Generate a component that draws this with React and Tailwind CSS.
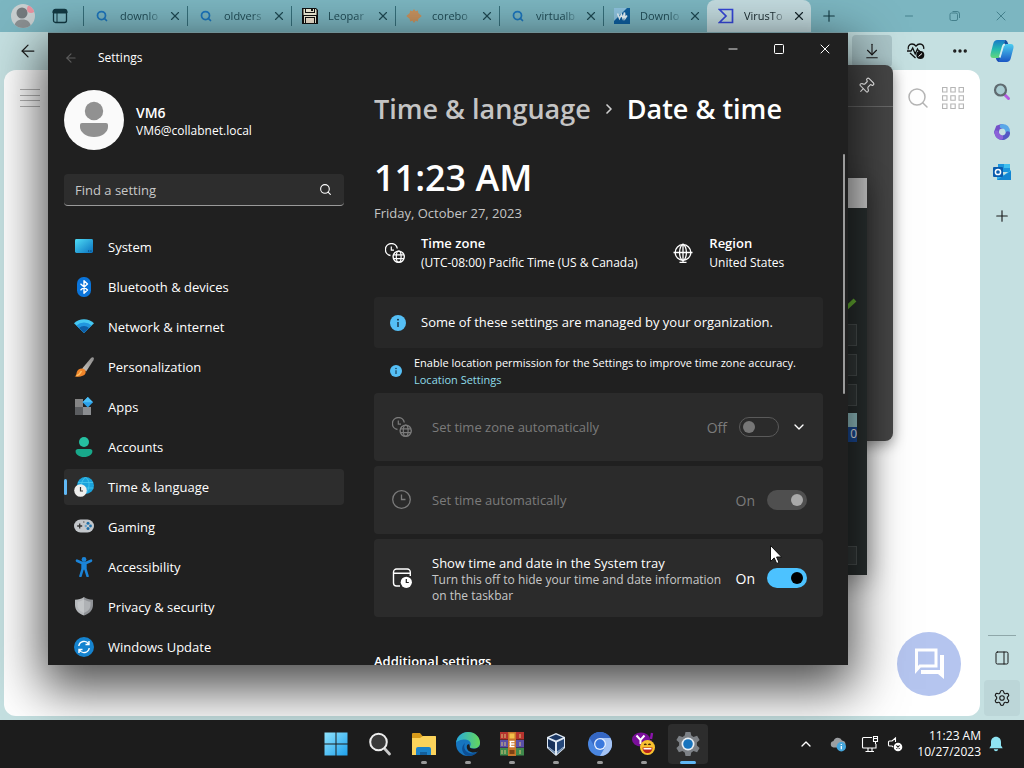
import { ArrowDownToLine, ArrowLeft, ChevronDown, ChevronRight, ChevronUp, Ellipsis, Minus, PanelRight, Pin, Plus, Search, Settings, Square, X } from 'lucide-react'
import { useState } from 'react'

/* ---------- navigation icons ---------- */

const SystemIcon = () => (
  <svg viewBox="0 0 20 20" className="size-5">
    <defs>
      <linearGradient id="sys" x1="0" y1="0" x2="1" y2="1">
        <stop offset="0" stopColor="#4fdcf5" />
        <stop offset="1" stopColor="#0a72c0" />
      </linearGradient>
    </defs>
    <rect x="1" y="2" width="18" height="14" rx="1.4" fill="url(#sys)" />
    <path d="M14 14h1.2M16.3 14h1.2" stroke="#083a66" />
  </svg>
)

const BluetoothIcon = () => (
  <svg viewBox="0 0 20 20" className="size-5">
    <rect x="3" y="0" width="14" height="20" rx="6.5" fill="#0a74da" />
    <path d="M6.5 6.8l7 6.2-3.5 3.2V3.8l3.5 3.2-7 6.2" fill="none" stroke="#fff" strokeWidth="1.4" strokeLinejoin="round" />
  </svg>
)

const WifiIcon = () => (
  <svg viewBox="0 0 20 20" className="size-5">
    <path d="M0 6.2a14.5 14.5 0 0 1 20 0L10 16z" fill="#45c8f2" />
    <path d="M2.4 8.5a11 11 0 0 1 15.2 0L10 16z" fill="#2196df" />
    <path d="M5 11a7.4 7.4 0 0 1 10 0l-5 5z" fill="#0d5ea8" />
  </svg>
)

const BrushIcon = () => (
  <svg viewBox="0 0 20 20" className="size-5">
    <defs>
      <linearGradient id="handle" x1="1" y1="0" x2="0" y2="1">
        <stop offset="0" stopColor="#8b8b8b" />
        <stop offset="1" stopColor="#c9c4bd" />
      </linearGradient>
    </defs>
    <path d="M19.4.5c.8.6.6 1.7 0 2.7l-7.2 11.4-4-3L17 1c.8-.8 1.7-1 2.4-.5z" fill="url(#handle)" />
    <path d="M8 11.4c2 0 4 1.6 3.7 3.8C11.3 18.3 8 20 .6 19.6c1.8-1 1.7-2.3 2.2-4.5.5-2.3 2.5-3.7 5.2-3.7z" fill="#f0852a" />
    <path d="M2.5 18.8c2.5-.6 3.5-2 5-4.8" fill="none" stroke="#ffc163" strokeWidth="1.5" />
  </svg>
)

const AppsIcon = () => (
  <svg viewBox="0 0 20 20" className="size-5">
    <rect x="1" y="2" width="8" height="8" fill="#858585" />
    <rect x="1" y="10" width="8" height="8" fill="#5b5d60" />
    <rect x="9" y="10" width="8" height="8" fill="#8b8d90" />
    <path d="M13.8 0l5.2 5.2-5.2 5.2-5.2-5.2z" fill="#2ba1ea" />
    <path d="M13.8 0l5.2 5.2H8.6z" fill="#4cc0f7" />
  </svg>
)

const AccountsIcon = () => (
  <svg viewBox="0 0 20 20" className="size-5">
    <circle cx="10" cy="5" r="5" fill="#25c0a1" />
    <path d="M4 12h12c1.5 0 2.4 1 2.4 2.2 0 3.2-3.4 5.8-8.4 5.8s-8.4-2.6-8.4-5.8C1.6 13 2.5 12 4 12z" fill="#18a88a" />
  </svg>
)

const TimeIcon = () => (
  <svg viewBox="0 0 20 20" className="size-5">
    <circle cx="11.5" cy="8.5" r="8.5" fill="#1ba3dc" />
    <path d="M11.5 0c-3 3-4 5-4 8.5M11.5 0c4 3 5 9 1 16M4 5.5h15M4 11h15.5" fill="none" stroke="#4cc9ee" strokeWidth=".8" />
    <circle cx="6.5" cy="13.5" r="6.3" fill="#eeeeec" />
    <path d="M6.5 10v4H9" fill="none" stroke="#333" strokeWidth="1.2" />
  </svg>
)

const GamingIcon = () => (
  <svg viewBox="0 0 20 20" className="size-5">
    <rect x="0" y="2.5" width="20" height="13" rx="6.5" fill="#c3c7cb" />
    <path d="M5.7 6.5v5M3.2 9h5" stroke="#333" strokeWidth="1.3" />
    <circle cx="14" cy="6.3" r="1.5" fill="#1f6fa8" />
    <circle cx="14" cy="11.5" r="1.5" fill="#1f6fa8" />
    <circle cx="11.8" cy="9" r="1.2" fill="#6aa3cb" />
    <circle cx="16.5" cy="9" r="1.4" fill="#1f6fa8" />
    <path d="M9 5h1.5" stroke="#555" />
  </svg>
)

const AccessibilityIcon = () => (
  <svg viewBox="0 0 20 20" className="size-5">
    <circle cx="10" cy="2.4" r="2.4" fill="#1b84d8" />
    <path d="M3 3.7l4.5 2.1h5L17 3.7M10 6v5.5M8.6 7v5L6.5 19M11.4 7v5l2.1 7" fill="none" stroke="#1b84d8" strokeWidth="2.6" strokeLinecap="round" strokeLinejoin="round" />
  </svg>
)

const ShieldIcon = () => (
  <svg viewBox="0 0 20 20" className="size-5">
    <path d="M10 0c2.5 2 5.5 2.7 9 2.8V8c0 5-3.5 8.6-9 10.5z" fill="#8f9296" />
    <path d="M10 0C7.5 2 4.5 2.7 1 2.8V8c0 5 3.5 8.6 9 10.5z" fill="#b5b8bb" />
    <path d="M10 2.5c2 1.3 4.2 2 6.5 2.2V8c0 3.6-2.4 6.3-6.5 7.9C5.9 14.3 3.5 11.6 3.5 8V4.7C5.8 4.5 8 3.8 10 2.5z" fill="#cfd1d3" opacity=".5" />
  </svg>
)

const UpdateIcon = () => (
  <svg viewBox="0 0 20 20" className="size-5">
    <circle cx="10" cy="10" r="10" fill="#1583cf" />
    <path d="M4.8 9a5.3 5.3 0 0 1 9.8-2M15.2 11a5.3 5.3 0 0 1-9.8 2M15 4v3.5h-3.5M5 16v-3.5h3.5" fill="none" stroke="#fff" strokeWidth="1.4" />
  </svg>
)

/* ---------- content icons ---------- */

const ZoneIcon = () => (
  <svg viewBox="0 0 20 20" className="size-5 shrink-0" fill="none" stroke="currentColor">
    <path d="M5.5 12.5A6 6 0 1 1 12.3 5.5" strokeWidth="1.4" />
    <path d="M6.3 3.5v3.7H9" strokeWidth="1.2" />
    <circle cx="13.7" cy="13.7" r="5.6" strokeWidth="1.4" />
    <ellipse cx="13.7" cy="13.7" rx="2.4" ry="5.6" strokeWidth="1.2" />
    <path d="M8.4 11.8h10.6M8.4 15.6h10.6" strokeWidth="1.2" />
  </svg>
)

const RegionIcon = () => (
  <svg viewBox="0 0 20 20" className="size-5 shrink-0" fill="none" stroke="currentColor" strokeWidth="1.3">
    <circle cx="10" cy="9.5" r="7.8" />
    <ellipse cx="10" cy="9.5" rx="3.4" ry="7.8" />
    <path d="M.5 9.5h19M10 .5v19M6.5 19.3h7" />
  </svg>
)

const ClockIcon = () => (
  <svg viewBox="0 0 20 20" className="size-5 shrink-0" fill="none" stroke="currentColor" strokeWidth="1.3">
    <circle cx="9.5" cy="9.5" r="8.8" />
    <path d="M9.5 4.5v5h4" />
  </svg>
)

const TrayClockIcon = () => (
  <svg viewBox="0 0 20 20" className="size-5 shrink-0">
    <path d="M8 18H4.5A3 3 0 0 1 1.5 15V4a3 3 0 0 1 3-3h10.8a3 3 0 0 1 3 3v4M1.5 5.3h17" fill="none" stroke="#fff" strokeWidth="1.4" />
    <circle cx="14.3" cy="14.3" r="5.6" fill="#fff" />
    <path d="M14.3 11v3.5h2.5" fill="none" stroke="#222" strokeWidth="1.2" />
  </svg>
)

const InfoIcon = ({ className }) => (
  <svg viewBox="0 0 16 16" className={className}>
    <circle cx="8" cy="8" r="8" fill="#55bff5" />
    <path d="M8 7v5" stroke="#123" strokeWidth="1.3" />
    <circle cx="8" cy="4.7" r=".9" fill="#123" />
  </svg>
)

/* ---------- browser icons ---------- */

const TabSearchIcon = () => <Search className="size-3 text-[#1d76bd]" strokeWidth={3.5} />

const FloppyIcon = () => (
  <svg viewBox="0 0 16 16" className="size-4">
    <path d="M0 0h14l2 2v14H0z" fill="#111" />
    <path d="M1.5 1h12l1 1v5h-13z" fill="#f4f1da" />
    <path d="M3 0h10v5H3z" fill="#111" />
    <path d="M4 1h8v3H4z" fill="#f4f1da" />
    <path d="M9 1h2v2H9z" fill="#111" />
    <path d="M2 8h12v7H2z" fill="#f4f1da" />
    <path d="M3 9h10v6H3z" fill="#111" />
    <path d="M4 10h8v5H4z" fill="#f4e8d4" />
  </svg>
)

const StarburstIcon = () => (
  <svg viewBox="0 0 16 16" className="size-4">
    <path d="M8 1l1.6 2.2L12 2.5l.2 2.4L15.8 8l-3.6 3.1-.2 2.4-2.4-.7L8 15l-1.6-2.2-2.4.7-.2-2.4L.2 8l3.6-3.1.2-2.4 2.4.7z" fill="#c99460" />
  </svg>
)

const WaveIcon = () => (
  <svg viewBox="0 0 16 16" className="size-4">
    <rect width="16" height="16" fill="#0e5f9f" />
    <path d="M0 0h13L0 13z" fill="#8fc4e0" />
    <path d="M3.5 5.5l2 5 2-4 1.5 4 1.5-6 .5 6 2-3" fill="none" stroke="#e8f5fb" strokeWidth="1.5" />
  </svg>
)

const SigmaIcon = () => (
  <svg viewBox="0 0 16 16" className="size-4">
    <path d="M1.5 1.5h13v13h-13L8 8z" fill="none" stroke="#3546d8" strokeWidth="1.7" />
  </svg>
)

const WorkspaceIcon = () => (
  <svg viewBox="0 0 16 16" className="size-4">
    <rect x="1.5" y="1.5" width="13" height="13" rx="2" fill="none" stroke="#123943" strokeWidth="1.3" />
    <path d="M1 3.5A2 2 0 0 1 3 1.5h10a2 2 0 0 1 2 2V5H1zM5 5v9" fill="#123943" stroke="#123943" />
  </svg>
)

const HealthIcon = () => (
  <svg viewBox="0 0 18 18" className="size-[18px]" fill="none" stroke="#111" strokeWidth="1.3">
    <path d="M1.3 7.5C.5 4.5 2.5 2 5 2c1.7 0 3 .8 4 2.2C10 2.8 11.3 2 13 2c2.5 0 4.3 2.3 3.7 5M3 11l5.5 5" />
    <path d="M0 9h4l1.7-3 2.5 6L10.5 7l1.2 2H13" />
    <circle cx="13.3" cy="13" r="4" fill="#111" stroke="none" />
    <path d="M11.5 14.5l3.5-3" stroke="#fff" strokeWidth="1" />
  </svg>
)

const CopilotIcon = () => (
  <svg viewBox="0 0 24 24" className="size-6">
    <defs>
      <linearGradient id="copA" x1="0" y1="0" x2="0" y2="1">
        <stop offset="0" stopColor="#1878c8" />
        <stop offset=".5" stopColor="#22b8b0" />
        <stop offset="1" stopColor="#62d67c" />
      </linearGradient>
      <linearGradient id="copB" x1="0" y1="0" x2="0" y2="1">
        <stop offset="0" stopColor="#1956c4" />
        <stop offset="1" stopColor="#4ccdf0" />
      </linearGradient>
    </defs>
    <path d="M14.5 1c2.2 0 3.2 1.5 4 5.500h-5z" fill="#15509f" />
    <path d="M9.5 23c-2.2 0-3.2-1.5-4-5.500h5z" fill="#1c4fb5" />
    <path d="M7.5 1H15l-4.3 15.5C10.2 18.2 9.2 19 7.7 19H3.2C.8 19 0 17 .6 14.7L3.3 4.5C3.9 2.2 5.2 1 7.5 1z" fill="url(#copA)" />
    <path d="M7.5 1H15l-4.3 15.5C10.2 18.2 9.2 19 7.7 19H3.2C.8 19 0 17 .6 14.7L3.3 4.5C3.9 2.2 5.2 1 7.5 1z" fill="url(#copB)" transform="rotate(180 12 12)" />
    <path d="M15 5.500c-1.2 0-1.7.5-2 1.500L9.700 18.500" fill="none" stroke="#d3eef0" strokeWidth="1.8" />
  </svg>
)

const LoupeIcon = () => (
  <svg viewBox="0 0 18 18" className="size-[18px]">
    <path d="M11.5 11.5l4 4" stroke="#b35be0" strokeWidth="3" strokeLinecap="round" />
    <circle cx="7.5" cy="7" r="5.5" fill="#a9cdd2" stroke="#5f6b70" strokeWidth="2.2" />
  </svg>
)

const OfficeIcon = () => (
  <svg viewBox="0 0 18 18" className="size-[18px]" fill="none" strokeWidth="4.5" strokeLinecap="round">
    <path d="M9 3.2L5 4.5 3.5 8.5" stroke="#7451c9" />
    <path d="M9 3.2c4 0 5.7 2 5.8 6" stroke="#5aa8e8" />
    <path d="M3.5 9.5C4.5 14 8 15.5 11 14.5c2-.7 3.5-2 3.8-4" stroke="#5357c4" />
    <path d="M3.5 9.5c.5 3 2.5 4.5 4.5 5" stroke="#8c62d8" />
  </svg>
)

const OutlookIcon = () => (
  <svg viewBox="0 0 18 18" className="size-[18px]">
    <path d="M5 1h12v8H5z" fill="#1c95dd" />
    <path d="M11 1h6v4h-6z" fill="#3fc0ef" />
    <path d="M4 7l7 5 7-5v10H4z" fill="#31b1ec" />
    <path d="M4 17l14-9v9z" fill="#1385d1" />
    <rect x="0" y="4" width="10" height="10" rx="1" fill="#0a5cae" />
    <circle cx="5" cy="9" r="2.6" fill="none" stroke="#fff" strokeWidth="1.5" />
  </svg>
)

const ChatIcon = () => (
  <svg viewBox="0 0 32 32" className="size-8">
    <path d="M2 2h21v16H7l-3.5 4V3.5" fill="none" stroke="#fff" strokeWidth="3" />
    <path d="M27 7h4v24l-6-5H8v-4h19z" fill="#fff" />
  </svg>
)

/* ---------- taskbar icons ---------- */

const StartIcon = () => (
  <svg viewBox="0 0 24 24" className="size-6">
    <defs>
      <linearGradient id="win" x1="0" y1="0" x2="1" y2="1">
        <stop offset="0" stopColor="#8fe3fd" />
        <stop offset="1" stopColor="#1ea0ec" />
      </linearGradient>
    </defs>
    <path d="M.5.5h11v11H.5zM12.5.5h11v11h-11zM.5 12.5h11v11H.5zM12.5 12.5h11v11h-11z" fill="url(#win)" />
  </svg>
)

const TaskSearchIcon = () => (
  <svg viewBox="0 0 24 24" className="size-6">
    <path d="M16.5 16.5l5 5.5" stroke="#c9c9c9" strokeWidth="2.8" strokeLinecap="round" />
    <circle cx="10.5" cy="10" r="8.3" fill="#3a3a3a" stroke="#eee" strokeWidth="2" />
  </svg>
)

const FolderIcon = () => (
  <svg viewBox="0 0 24 24" className="size-6">
    <path d="M0 2a1 1 0 0 1 1-1h7l2.5 3H23a1 1 0 0 1 1 1v4H0z" fill="#d79a1a" />
    <path d="M0 6h8l3-2h12a1 1 0 0 1 1 1v18H0z" fill="#fbd35b" />
    <path d="M4 23v-6a2 2 0 0 1 2-2h11a2 2 0 0 1 2 2v6z" fill="#1b82c9" />
    <path d="M8 23v-3h7v3z" fill="#135f9c" />
  </svg>
)

const EdgeIcon = () => (
  <svg viewBox="0 0 24 24" className="size-6">
    <defs>
      <linearGradient id="edge" x1="0" y1="0" x2="1" y2="0">
        <stop offset="0" stopColor="#27a9dd" />
        <stop offset="1" stopColor="#65d85a" />
      </linearGradient>
    </defs>
    <circle cx="12" cy="12" r="12" fill="#1675bf" />
    <path d="M0 11C1 4 6 0 12 0c7 0 12 5 12 10.5 0 4-3 6-6 6s-4.5-1-4-2c2-3 0-7-5-7-4 0-8 1.500-9 3.500z" fill="url(#edge)" />
    <path d="M9 11c-2.5 5 1 10.5 7.5 10.5 2 0 4-.7 5.500-2-2 3-6 4.500-10 4.500-6-1.500-8-9-3-13z" fill="#0d4f94" />
    <path d="M13.8 14.5c-.5 1.3 1 2.2 4.2 2.2 2.5 0 5-1.2 5.8-3.7C24 17 22.5 19 21 20c-5 1.5-10.5-.5-10.2-5.5.2-2 1.5-2.5 2.5-2z" fill="#1c1c1c" />
  </svg>
)

const ArchiveIcon = () => (
  <svg viewBox="0 0 24 24" className="size-6">
    <rect y="0" width="24" height="7.5" fill="#b5332e" />
    <rect y="8" width="24" height="7.5" fill="#5a4fa8" />
    <rect y="16" width="24" height="7.5" fill="#3f8a4c" />
    <path d="M2 2v4M5 2v4M2 10v4M5 10v4M2 18v4M5 18v4M20 2v4M20 10v4M20 18v4" stroke="#d9c37a" />
    <rect x="8" y="0" width="8" height="24" fill="#c7762b" />
    <path d="M9.5 1.5h5v5h-5z" fill="#f2c04a" />
    <path d="M9.5 9.5h5M9.5 12h5M9.5 14.5h5M10.5 9v6" stroke="#fff" strokeWidth="1.3" />
    <path d="M9.5 18h5v4h-5z" fill="#7d4114" />
  </svg>
)

const BoxIcon = () => (
  <svg viewBox="0 0 24 24" className="size-6">
    <path d="M12 1l9 4v11l-9 8-9-8V5z" fill="#dfe9f4" />
    <path d="M12 2.5l7 3-7 3-7-3z" fill="#1b3763" />
    <path d="M4 7l7 3.2v9.5L4 14.5z" fill="#17315a" />
    <path d="M20 7l-7 3.2v9.5l7-5.2z" fill="#24477a" />
    <path d="M4.5 16.5L11 22v-2l-6.5-5zM19.5 16.5L13 22v-2l6.5-5z" fill="#6f8db0" />
  </svg>
)

const ChromiumIcon = () => (
  <svg viewBox="0 0 24 24" className="size-6">
    <circle cx="12" cy="12" r="12" fill="#4a86e0" />
    <path d="M12 6h10.4A12 12 0 0 1 12 24l5.2-9z" fill="#a5c4f5" />
    <path d="M1.6 6A12 12 0 0 1 22.4 6H12l-5.2 9z" fill="#3567c4" />
    <circle cx="12" cy="12" r="6" fill="#e6effd" />
    <circle cx="12" cy="12" r="4.7" fill="#3a78dd" />
  </svg>
)

const MessengerIcon = () => (
  <svg viewBox="0 0 24 24" className="size-6">
    <ellipse cx="9" cy="7.5" rx="9" ry="7" fill="#7a0f9a" />
    <path d="M4.5 3.5l4 4.5 4-4.5M8.5 8v4" fill="none" stroke="#fff" strokeWidth="2" />
    <path d="M20 1l-1 6M18.8 8.5v1" stroke="#8c14ad" strokeWidth="2.4" />
    <circle cx="15.5" cy="15.5" r="7.5" fill="#f9c22e" />
    <path d="M10.5 15.5h10c0 3.5-2.2 5.5-5 5.5s-5-2-5-5.500z" fill="#b8231d" />
    <path d="M11.5 16h8v1.5h-8z" fill="#fff" />
    <path d="M12.3 13c.5-1.3 1.5-1.3 2 0M16.5 13c.5-1.3 1.5-1.3 2 0" fill="none" stroke="#3d2205" strokeWidth="1.2" />
  </svg>
)

const GearIcon = () => (
  <svg viewBox="0 0 24 24" className="size-6">
    <path d="M9.5 0h5l.8 3.6 2.2 1.3 3.6-1.1 2.5 4.3-2.7 2.5v2.8l2.7 2.5-2.5 4.3-3.6-1.1-2.2 1.3-.8 3.6h-5l-.8-3.6-2.2-1.3-3.6 1.1L.4 15.9l2.7-2.5v-2.8L.4 8.1l2.5-4.3 3.6 1.1 2.2-1.3z" fill="#7d8186" />
    <circle cx="12" cy="12" r="6.5" fill="#e8eef3" />
    <circle cx="12" cy="12" r="4.8" fill="#1673bd" />
  </svg>
)

const CloudIcon = () => (
  <svg viewBox="0 0 16 16" className="size-4">
    <path d="M3.5 11.5a3.3 3.3 0 0 1 0-6.5A4.500 4.500 0 0 1 12 4.500c2 .3 3.500 1.500 3.500 3.500s-1.500 3.500-3.500 3.500z" fill="#9b9ea1" />
    <circle cx="11.3" cy="10.7" r="4.7" fill="#45a6dc" />
    <path d="M11.3 10v3.3M11.3 8v1" stroke="#fff" strokeWidth="1.2" />
  </svg>
)

const NetworkIcon = () => (
  <svg viewBox="0 0 18 18" className="size-[18px]" fill="none" stroke="#fff" strokeWidth="1.1">
    <path d="M11 2.5H2.5A1 1 0 0 0 1.5 3.5V12a1 1 0 0 0 1 1H15V9M7 13v3M11 13v3M4.5 16.5H13" />
    <path d="M12.5 1.5h4v5h-4zM14.5 6.5V9M12.5 3.5h4" />
  </svg>
)

const MutedIcon = () => (
  <svg viewBox="0 0 16 16" className="size-4" fill="none" stroke="#fff" strokeWidth="1.1">
    <path d="M8.5 6V2L5 5H2.5a1 1 0 0 0-1 1v3a1 1 0 0 0 1 1H5l1 1" />
    <circle cx="11" cy="11" r="4.3" fill="#fff" stroke="none" />
    <path d="M9.4 9.4l3.2 3.2M12.6 9.4l-3.2 3.2" stroke="#1c1c1c" />
  </svg>
)

const BellIcon = () => (
  <svg viewBox="0 0 16 16" className="size-4">
    <path d="M8 .8c3 0 5 2.3 5 5.2v3.5l1.7 2.8H1.3L3 9.5V6C3 3.1 5 .8 8 .8zM5.8 13.3h4.4c-.3 1.3-1.1 2-2.2 2s-1.9-.7-2.2-2z" fill="#8fe3f2" />
  </svg>
)

/* ---------- data ---------- */

const tabs = [
  { title: 'downlo', icon: TabSearchIcon },
  { title: 'oldvers', icon: TabSearchIcon },
  { title: 'Leopar', icon: FloppyIcon },
  { title: 'corebo', icon: StarburstIcon },
  { title: 'virtualb', icon: TabSearchIcon },
  { title: 'Downlo', icon: WaveIcon },
  { title: 'VirusTo', icon: SigmaIcon, active: true },
]

const navItems = [
  { label: 'System', icon: SystemIcon },
  { label: 'Bluetooth & devices', icon: BluetoothIcon },
  { label: 'Network & internet', icon: WifiIcon },
  { label: 'Personalization', icon: BrushIcon },
  { label: 'Apps', icon: AppsIcon },
  { label: 'Accounts', icon: AccountsIcon },
  { label: 'Time & language', icon: TimeIcon, active: true },
  { label: 'Gaming', icon: GamingIcon },
  { label: 'Accessibility', icon: AccessibilityIcon },
  { label: 'Privacy & security', icon: ShieldIcon },
  { label: 'Windows Update', icon: UpdateIcon },
]

const taskApps = [
  { name: 'Start', icon: StartIcon },
  { name: 'Search', icon: TaskSearchIcon },
  { name: 'File Explorer', icon: FolderIcon, running: true },
  { name: 'Edge', icon: EdgeIcon, running: true },
  { name: 'WinRAR', icon: ArchiveIcon, running: true },
  { name: 'VirtualBox', icon: BoxIcon, running: true },
  { name: 'Chromium', icon: ChromiumIcon, running: true },
  { name: 'Messenger', icon: MessengerIcon, running: true },
  { name: 'Settings', icon: GearIcon, active: true },
]

/* ---------- browser ---------- */

function Tab({ tab }) {
  const Icon = tab.icon
  return (
    <div className={`flex h-8 max-w-[104px] min-w-0 flex-1 items-center ${tab.active ? 'rounded-t-lg bg-[#c3dbdf] text-[#16272c]' : 'text-[#1f4b55]'}`}>
      <span className={`h-5 w-px shrink-0 ${tab.active ? '' : 'bg-[#356f7b]'}`} />
      <span className="flex w-9 shrink-0 items-center justify-center"><Icon /></span>
      <button className="flex-1 text-left text-[11px] whitespace-nowrap [mask-image:linear-gradient(to_right,black_65%,transparent)]">{tab.title}</button>
      <button aria-label="Close tab" className="flex w-6 shrink-0 items-center justify-center"><X className="size-3.5" strokeWidth={2} /></button>
    </div>
  )
}

function Browser() {
  return (
    <div className="flex min-h-0 flex-1 flex-col bg-[#c5e0e1]">
      <div className="flex h-8 bg-[#7cb6c1]">
        <div className="flex w-[83px] shrink-0 items-center gap-[17px] pl-[11px]">
          <svg viewBox="0 0 24 24" className="size-6 rounded-full bg-[#c9cfd0]">
            <circle cx="11" cy="9" r="5.5" fill="#747a7d" />
            <path d="M3 24c0-6 4-8.5 8.5-8.5S20 18 20 24z" fill="#8b9092" />
            <circle cx="20" cy="5" r="4" fill="#e893a0" />
          </svg>
          <button aria-label="Workspaces"><WorkspaceIcon /></button>
        </div>
        {tabs.map((tab) => <Tab key={tab.title} tab={tab} />)}
        <button aria-label="New tab" className="flex w-9 items-center justify-center text-[#123943]"><Plus className="size-[18px]" strokeWidth={1.5} /></button>
        <div className="ml-auto flex shrink-0 text-[#44808c]">
          <button aria-label="Minimize" className="flex w-[46px] items-center justify-center"><Minus className="size-3" strokeWidth={2} /></button>
          <button aria-label="Restore" className="flex w-[46px] items-center justify-center">
            <svg viewBox="0 0 12 12" className="size-3" fill="none" stroke="currentColor">
              <rect x="1" y="3" width="7.5" height="7.5" rx="1.5" />
              <path d="M3.5 1.5h4.5a2.5 2.5 0 0 1 2.5 2.5v4" />
            </svg>
          </button>
          <button aria-label="Close" className="flex w-[46px] items-center justify-center"><X className="size-4" strokeWidth={1.5} /></button>
        </div>
      </div>
      <div className="flex min-h-0 flex-1">
        <div className="flex min-w-0 flex-1 flex-col pb-1 pl-1">
          <div className="flex h-[38px] shrink-0 items-center text-[#1a1a1a]">
            <button aria-label="Back" className="flex w-12 items-center justify-center"><ArrowLeft className="size-5" strokeWidth={1.5} /></button>
            <div className="ml-auto flex h-8 items-center">
              <button aria-label="Downloads" className="flex h-8 w-10 items-center justify-center rounded bg-[#aac5c8]"><ArrowDownToLine className="size-[18px]" strokeWidth={1.5} /></button>
              <button aria-label="Browser essentials" className="flex w-12 items-center justify-center"><HealthIcon /></button>
              <button aria-label="More" className="mr-1 flex w-10 items-center justify-center"><Ellipsis className="size-[18px]" strokeWidth={2.5} /></button>
            </div>
          </div>
          <div className="mr-1 flex flex-1 flex-col justify-between rounded-xl bg-white">
            <div className="flex items-center justify-between px-4 pt-4 text-[#b5b5b5]">
              <button aria-label="Menu">
                <svg viewBox="0 0 20 20" className="size-5" stroke="currentColor"><path d="M0 1.5h20M0 7.5h20M0 12.5h20M0 18.5h20" /></svg>
              </button>
              <div className="flex gap-3">
                <button aria-label="Search page"><Search className="size-6" strokeWidth={1.5} /></button>
                <button aria-label="Apps">
                  <svg viewBox="0 0 20 20" className="size-[22px]" fill="none" stroke="currentColor">
                    <path d="M.5.5h4v4h-4zM8 .5h4v4H8zM15.5.5h4v4h-4zM.5 8h4v4h-4zM8 8h4v4H8zM15.5 8h4v4h-4zM.5 15.5h4v4h-4zM8 15.5h4v4H8zM15.5 15.5h4v4h-4z" />
                  </svg>
                </button>
              </div>
            </div>
            <button aria-label="Chat" className="mr-[19px] mb-5 flex size-16 items-center justify-center self-end rounded-full bg-[#b5c5ef]"><ChatIcon /></button>
          </div>
        </div>
        <div className="flex w-10 shrink-0 flex-col items-center pt-[7px] pr-1 pb-1 text-[#1a1a1a]">
          <button aria-label="Copilot"><CopilotIcon /></button>
          <div className="mt-5 flex flex-col items-center gap-[22px]">
            <button aria-label="Search"><LoupeIcon /></button>
            <button aria-label="Microsoft 365"><OfficeIcon /></button>
            <button aria-label="Outlook"><OutlookIcon /></button>
          </div>
          <button aria-label="Customize" className="mt-[26px]"><Plus className="size-[18px]" strokeWidth={1.5} /></button>
          <div className="mt-auto flex flex-col items-center">
            <span className="mb-3 h-px w-7 bg-[#8fa7a9]" />
            <button aria-label="Hide sidebar" className="flex h-5 items-center"><PanelRight className="size-4" strokeWidth={1.5} /></button>
            <button aria-label="Sidebar settings" className="mt-3 flex size-9 items-center justify-center rounded bg-[#bcd6d8]"><Settings className="size-[18px]" strokeWidth={1.5} /></button>
          </div>
        </div>
      </div>
    </div>
  )
}

/* ---------- windows behind settings ---------- */

function DownloadsPopup() {
  return (
    <div className="absolute top-[65px] right-[131px] bottom-[327px] w-80 rounded-lg bg-[#464646] shadow-[0_4px_14px_rgba(0,0,0,0.4)]">
      <div className="flex h-[42px] items-center justify-end border-b border-[#6b6b6b] pr-[18px] text-white">
        <button aria-label="Pin"><Pin className="size-[18px] rotate-45" strokeWidth={1.5} /></button>
      </div>
    </div>
  )
}

function MachineWindow() {
  return (
    <div className="absolute top-[178px] right-[157px] bottom-[193px] flex w-96 flex-col bg-[#2a3030] shadow-[2px_6px_24px_rgba(0,0,0,0.35)]">
      <div className="h-[30px] bg-[#d6d6d6]" />
      <div className="flex flex-1 flex-col items-end pr-2.5">
        <svg viewBox="0 0 16 16" className="mt-[90px] size-4"><path d="M0 15L14 2" stroke="#6dbb35" strokeWidth="4" /></svg>
        <div className="mt-2.5 flex flex-col gap-2">
          <span className="h-[22px] w-10 border border-[#4d5353] bg-[#363c3c]" />
          <span className="h-[22px] w-10 border border-[#4d5353] bg-[#363c3c]" />
          <span className="h-[22px] w-10 border border-[#4d5353] bg-[#363c3c]" />
        </div>
        <div className="mt-[7px] flex h-[29px] w-10 items-end justify-end bg-linear-to-b from-[#9fd0d4] from-50% to-[#1c4fa0] to-50% text-[12px] leading-4 text-white">0</div>
        <span className="mt-auto mb-2.5 h-[19px] w-10 border border-[#4d5353] bg-[#363c3c]" />
      </div>
    </div>
  )
}

/* ---------- settings window ---------- */

function Toggle({ label, checked, onChange, disabled }) {
  return (
    <label className={`flex shrink-0 items-center gap-3 text-[14px] ${disabled ? 'text-[#7b7b7b]' : 'text-white'}`}>
      {checked ? 'On' : 'Off'}
      <input
        type="checkbox"
        role="switch"
        aria-label={label}
        checked={checked}
        disabled={disabled}
        onChange={(e) => onChange?.(e.target.checked)}
        className="flex h-5 w-10 appearance-none items-center rounded-full border border-[#5a5a5a] px-[3px] before:size-3 before:rounded-full before:bg-[#767676] checked:justify-end checked:border-transparent checked:bg-[#4cc2ff] checked:before:bg-black disabled:checked:bg-[#4f4f4f] disabled:checked:before:bg-[#a9a9a9]"
      />
    </label>
  )
}

function Sidebar() {
  return (
    <div className="flex w-[280px] shrink-0 flex-col">
      <div className="mt-[7px] flex items-center gap-3">
        <svg viewBox="0 0 60 60" className="size-[60px]">
          <circle cx="30" cy="30" r="30" fill="#fafafa" />
          <circle cx="30" cy="21" r="9.2" fill="#919191" />
          <path d="M18 33h24a2 2 0 0 1 2 2v2c0 5-6 10-14 10s-14-5-14-10v-2a2 2 0 0 1 2-2z" fill="#919191" />
        </svg>
        <div className="pt-0.5 text-white">
          <div className="text-[14px] leading-5 font-semibold">VM6</div>
          <div className="text-[12px] leading-4">VM6@collabnet.local</div>
        </div>
      </div>
      <div className="mt-6 flex h-8 shrink-0 items-center rounded border-b border-[#9a9a9a] bg-[#2d2d2d] pr-3 pl-[11px] text-white">
        <input aria-label="Find a setting" placeholder="Find a setting" className="min-w-0 flex-1 bg-transparent pt-0.5 text-[13px] outline-none placeholder:text-[#c8c8c8]" />
        <Search className="size-[13px]" strokeWidth={2} />
      </div>
      <nav className="mt-[23px] flex flex-col gap-1">
        {navItems.map(({ label, icon: Icon, active }) => (
          <a key={label} href="#" className={`flex h-9 shrink-0 items-center rounded text-[13px] text-white ${active ? 'bg-[#2d2d2d]' : ''}`}>
            <span className={`mr-[7px] h-4 w-[3px] rounded-full ${active ? 'bg-[#60b8f5]' : ''}`} />
            <Icon />
            <span className="ml-3.5 pt-0.5">{label}</span>
          </a>
        ))}
      </nav>
    </div>
  )
}

function DateTimePage() {
  const [showInTray, setShowInTray] = useState(true)
  return (
    <div className="flex min-w-0 flex-1 flex-col text-white">
      <h1 className="mt-1.5 flex h-10 shrink-0 items-center text-[27px] font-semibold whitespace-nowrap">
        <a href="#" className="text-[#c4c4c4]">Time &amp; language</a>
        <ChevronRight className="mx-2.5 size-4 text-[#cfcfcf]" strokeWidth={2.5} />
        Date &amp; time
      </h1>
      <div className="mt-6 flex min-h-0 flex-1 flex-col overflow-hidden pr-[25px]">
        <div className="shrink-0 text-[36px] leading-[50px] font-semibold">11:23 AM</div>
        <div className="shrink-0 text-[13px] leading-5 text-[#c5c5c5]">Friday, October 27, 2023</div>
        <div className="mt-2.5 grid shrink-0 grid-cols-[2fr_1fr] items-center">
          <div className="flex items-center gap-4 pl-[11px]">
            <ZoneIcon />
            <div className="whitespace-nowrap">
              <div className="text-[13px] leading-5 font-semibold">Time zone</div>
              <div className="text-[12px] leading-5">(UTC-08:00) Pacific Time (US &amp; Canada)</div>
            </div>
          </div>
          <div className="flex items-center gap-4">
            <RegionIcon />
            <div className="whitespace-nowrap">
              <div className="text-[13px] leading-5 font-semibold">Region</div>
              <div className="text-[12px] leading-5">United States</div>
            </div>
          </div>
        </div>
        <div className="mt-6 flex h-[51px] shrink-0 items-center gap-[15px] rounded bg-[#272727] pl-4 text-[13px]">
          <InfoIcon className="size-4 shrink-0" />
          Some of these settings are managed by your organization.
        </div>
        <div className="mt-1.5 flex shrink-0 items-center gap-3 pl-4 text-[11px] leading-[17px]">
          <InfoIcon className="size-3 shrink-0" />
          <div className="whitespace-nowrap">
            <div>Enable location permission for the Settings to improve time zone accuracy.</div>
            <a href="#" className="text-[#8fdcea]">Location Settings</a>
          </div>
        </div>
        <div className="mt-[5px] flex shrink-0 flex-col gap-[5px]">
          <div className="flex h-[68px] items-center rounded bg-[#2b2b2b] pr-4 pl-[18px] text-[13px] text-[#7b7b7b]">
            <ZoneIcon />
            <span className="ml-5 flex-1 pt-0.5">Set time zone automatically</span>
            <Toggle label="Set time zone automatically" checked={false} disabled />
            <button aria-label="Expand" className="ml-3 text-white"><ChevronDown className="size-4" strokeWidth={2} /></button>
          </div>
          <div className="flex h-[68px] items-center rounded bg-[#2b2b2b] pr-4 pl-[18px] text-[13px] text-[#7b7b7b]">
            <ClockIcon />
            <span className="ml-5 flex-1 pt-0.5">Set time automatically</span>
            <Toggle label="Set time automatically" checked disabled />
          </div>
          <div className="flex h-[78px] items-center rounded bg-[#2b2b2b] pr-4 pl-[18px]">
            <TrayClockIcon />
            <div className="mr-2 ml-5 flex-1 pt-0.5">
              <div className="text-[13px] leading-[18px]">Show time and date in the System tray</div>
              <div className="text-[12px] leading-4 text-[#c8c8c8]">Turn this off to hide your time and date information on the taskbar</div>
            </div>
            <Toggle label="Show time and date in the System tray" checked={showInTray} onChange={setShowInTray} />
          </div>
        </div>
        <h2 className="mt-[34px] shrink-0 text-[13px] leading-5 font-semibold">Additional settings</h2>
      </div>
    </div>
  )
}

function SettingsWindow() {
  return (
    <div className="absolute top-8 right-44 bottom-[103px] left-12 flex flex-col overflow-hidden border-t border-[#6f8f95] bg-[#202020] shadow-[0_18px_48px_6px_rgba(0,0,0,0.7)]">
      <div className="flex h-[50px] shrink-0 items-start text-white">
        <div className="flex h-[50px] flex-1 items-center gap-5 pl-4">
          <button aria-label="Back" className="text-[#5c5c5c]"><ArrowLeft className="size-3.5" strokeWidth={2} /></button>
          <span className="text-[12px]">Settings</span>
        </div>
        <button aria-label="Minimize" className="flex h-8 w-[46px] items-center justify-center"><Minus className="size-3.5" strokeWidth={1.5} /></button>
        <button aria-label="Maximize" className="flex h-8 w-[46px] items-center justify-center"><Square className="size-3" strokeWidth={2} /></button>
        <button aria-label="Close" className="flex h-8 w-[46px] items-center justify-center"><X className="size-4" strokeWidth={1.5} /></button>
      </div>
      <div className="flex min-h-0 flex-1 gap-[30px] pl-4">
        <Sidebar />
        <DateTimePage />
      </div>
      <div className="absolute top-[121px] right-[3px] h-60 w-0.5 rounded-full bg-[#9b9b9b]" />
    </div>
  )
}

/* ---------- taskbar ---------- */

function Taskbar() {
  return (
    <div className="relative grid h-12 shrink-0 grid-cols-[1fr_auto_1fr] items-center bg-[#1c1c1c] text-white">
      <span />
      <div className="flex gap-1">
        {taskApps.map(({ name, icon: Icon, running, active }) => (
          <button key={name} aria-label={name} className={`flex h-10 w-10 flex-col items-center rounded pt-2 ${active ? 'bg-[#2d2d2d]' : ''}`}>
            <Icon />
            <span className={`mt-[5px] h-[3px] rounded-full ${active ? 'w-4 bg-[#60b8f5]' : running ? 'w-1.5 bg-[#9a9a9a]' : ''}`} />
          </button>
        ))}
      </div>
      <div className="flex items-center justify-end pr-5">
        <button aria-label="Show hidden icons" className="mr-4"><ChevronUp className="size-4" strokeWidth={2} /></button>
        <span className="mr-[15px]"><CloudIcon /></span>
        <span className="mr-2"><NetworkIcon /></span>
        <MutedIcon />
        <div className="ml-3.5 text-right text-[12px] leading-4 whitespace-nowrap">
          <div>11:23 AM</div>
          <div>10/27/2023</div>
        </div>
        <button aria-label="Notifications" className="ml-[7px]"><BellIcon /></button>
      </div>
    </div>
  )
}

export default function App() {
  return (
    <div className="relative flex h-screen flex-col overflow-hidden font-['Open_Sans','Noto_Sans',sans-serif]">
      <Browser />
      <DownloadsPopup />
      <MachineWindow />
      <SettingsWindow />
      <Taskbar />
      <svg viewBox="0 0 12 19" className="pointer-events-none absolute top-[545px] left-[770px] h-[19px] w-3">
        <path d="M.5.5v16l3.7-3.6L6.7 18.5l2.3-1-2.4-5.5h5z" fill="#fff" stroke="#111" />
      </svg>
    </div>
  )
}
